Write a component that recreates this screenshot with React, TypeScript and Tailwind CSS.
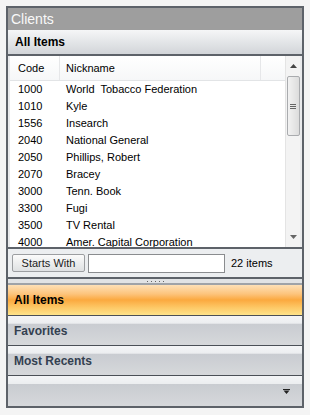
import React from "react";

const rows: [string, string][] = [
	["1000", "World  Tobacco Federation"],
	["1010", "Kyle"],
	["1556", "Insearch"],
	["2040", "National General"],
	["2050", "Phillips, Robert"],
	["2070", "Bracey"],
	["3000", "Tenn. Book"],
	["3300", "Fugi"],
	["3500", "TV Rental"],
	["4000", "Amer. Capital Corporation"],
	["4100", "Brown, Jim"],
];

function NavBar({ label, last, children }: { label?: string; last?: boolean; children?: React.ReactNode }) {
	return (
		<div className={last
			? "h-[30px] flex items-center pl-[6px] pr-[12px] bg-[linear-gradient(to_bottom,#f4f5f7_0%,#eceef0_25%,#c9ccd1_28%,#d6d8db_100%)] text-[12px] font-bold text-[#334050]"
			: "h-[30px] flex items-center pl-[6px] pr-[12px] border-b border-[#4b5057] bg-[linear-gradient(to_bottom,#f4f5f7_0%,#eceef0_25%,#c9ccd1_28%,#d6d8db_100%)] text-[12px] font-bold text-[#334050]"}>
			<span className="flex-1">{label}</span>
			{children}
		</div>
	);
}

export default function App() {
	return (
		<div className="w-[310px] h-[415px] bg-[#f4f4f4] pt-[6px] pl-[6px] font-['Liberation_Sans',Arial,sans-serif]">
			<div className="w-[298px] border-2 border-[#5d6269] flex flex-col">
				<div className="h-[22px] bg-[#9e9e9e] text-[#f9f9f9] text-[14px] leading-[22px] pl-[3px]">Clients</div>
				<div className="h-[26px] flex items-center pl-[7px] bg-[linear-gradient(to_bottom,#f5f6f7,#d2d5d9)] border-b-2 border-[#5d6269] text-[12px] font-bold text-black">
					All Items
				</div>

				<div className="bg-[#e9eaec] pl-[2px] pr-[2px]">
					<div className="h-[191px] bg-white flex overflow-hidden">
						<div className="flex-1 flex flex-col text-[11px] text-black">
							<div className="h-[25px] shrink-0 flex items-center bg-[linear-gradient(to_bottom,#ffffff,#f6f7f8)] border-b border-[#e2e4e6]">
								<span className="w-[50px] pl-[8px] border-r border-[#e6e7e9] h-full flex items-center">Code</span>
								<span className="w-[201px] pl-[6px] border-r border-[#e6e7e9] h-full flex items-center">Nickname</span>
							</div>
							{rows.map(([code, name]) => (
								<div key={code} className="h-[17px] shrink-0 flex items-center">
									<span className="w-[50px] pl-[8px]">{code}</span>
									<span className="pl-[6px] whitespace-pre">{name}</span>
								</div>
							))}
						</div>
						<div className="w-[15px] bg-[#f3f3f3] border-l border-[#e4e4e4] flex flex-col items-center">
							<div className="h-[20px] shrink-0 flex items-center justify-center">
								<svg width="7" height="4" viewBox="0 0 7 4"><path d="M3.5 0L7 4H0z" fill="#444" /></svg>
							</div>
							<div className="w-[13px] h-[60px] shrink-0 rounded-[2px] border border-[#a9abae] bg-[linear-gradient(to_right,#f2f2f2,#dcdcdc)] flex flex-col items-center justify-center gap-[1px]">
								<div className="w-[6px] h-[1px] bg-[#666]" />
								<div className="w-[6px] h-[1px] bg-[#666]" />
								<div className="w-[6px] h-[1px] bg-[#666]" />
							</div>
							<div className="flex-1" />
							<div className="h-[20px] shrink-0 flex items-center justify-center">
								<svg width="7" height="4" viewBox="0 0 7 4"><path d="M0 0H7L3.5 4z" fill="#666" /></svg>
							</div>
						</div>
					</div>
				</div>

				<div className="h-[30px] bg-[#eceef0] border-t-2 border-[#5d6269] flex items-center pl-[4px] gap-[3px] text-[11px] text-black">
					<div className="w-[73px] h-[18px] shrink-0 rounded-[2px] border border-[#9c9ea1] bg-[linear-gradient(to_bottom,#fbfbfb,#dfe1e3)] flex items-center justify-center whitespace-nowrap text-[#222]">
						Starts With
					</div>
					<div className="w-[137px] h-[19px] shrink-0 bg-white border border-[#8a8c8f]" />
					<span className="pl-[3px] whitespace-nowrap">22 items</span>
				</div>

				<div className="h-[8px] border-t-2 border-b-2 border-t-[#5d6269] border-b-[#9fa3a8] bg-[#e1e3e5] flex justify-center items-center gap-[3px]">
					<div className="w-[1px] h-[1px] bg-[#666]" />
					<div className="w-[1px] h-[1px] bg-[#666]" />
					<div className="w-[1px] h-[1px] bg-[#666]" />
					<div className="w-[1px] h-[1px] bg-[#666]" />
					<div className="w-[1px] h-[1px] bg-[#666]" />
				</div>

				<div className="h-[31px] flex items-center pl-[6px] border-b border-[#4b5057] bg-[linear-gradient(to_bottom,#fee0b6_0%,#fdc47c_30%,#fba93f_50%,#fdc866_75%,#fee38a_100%)] text-[12px] font-bold text-black">
					All Items
				</div>
				<NavBar label="Favorites" />
				<NavBar label="Most Recents" />
				<NavBar last>
					<svg width="7" height="5" viewBox="0 0 7 5"><path d="M0 0H7V1H0zM0.5 1.5H6.5L3.5 5z" fill="#222" /></svg>
				</NavBar>
			</div>
		</div>
	);
}
